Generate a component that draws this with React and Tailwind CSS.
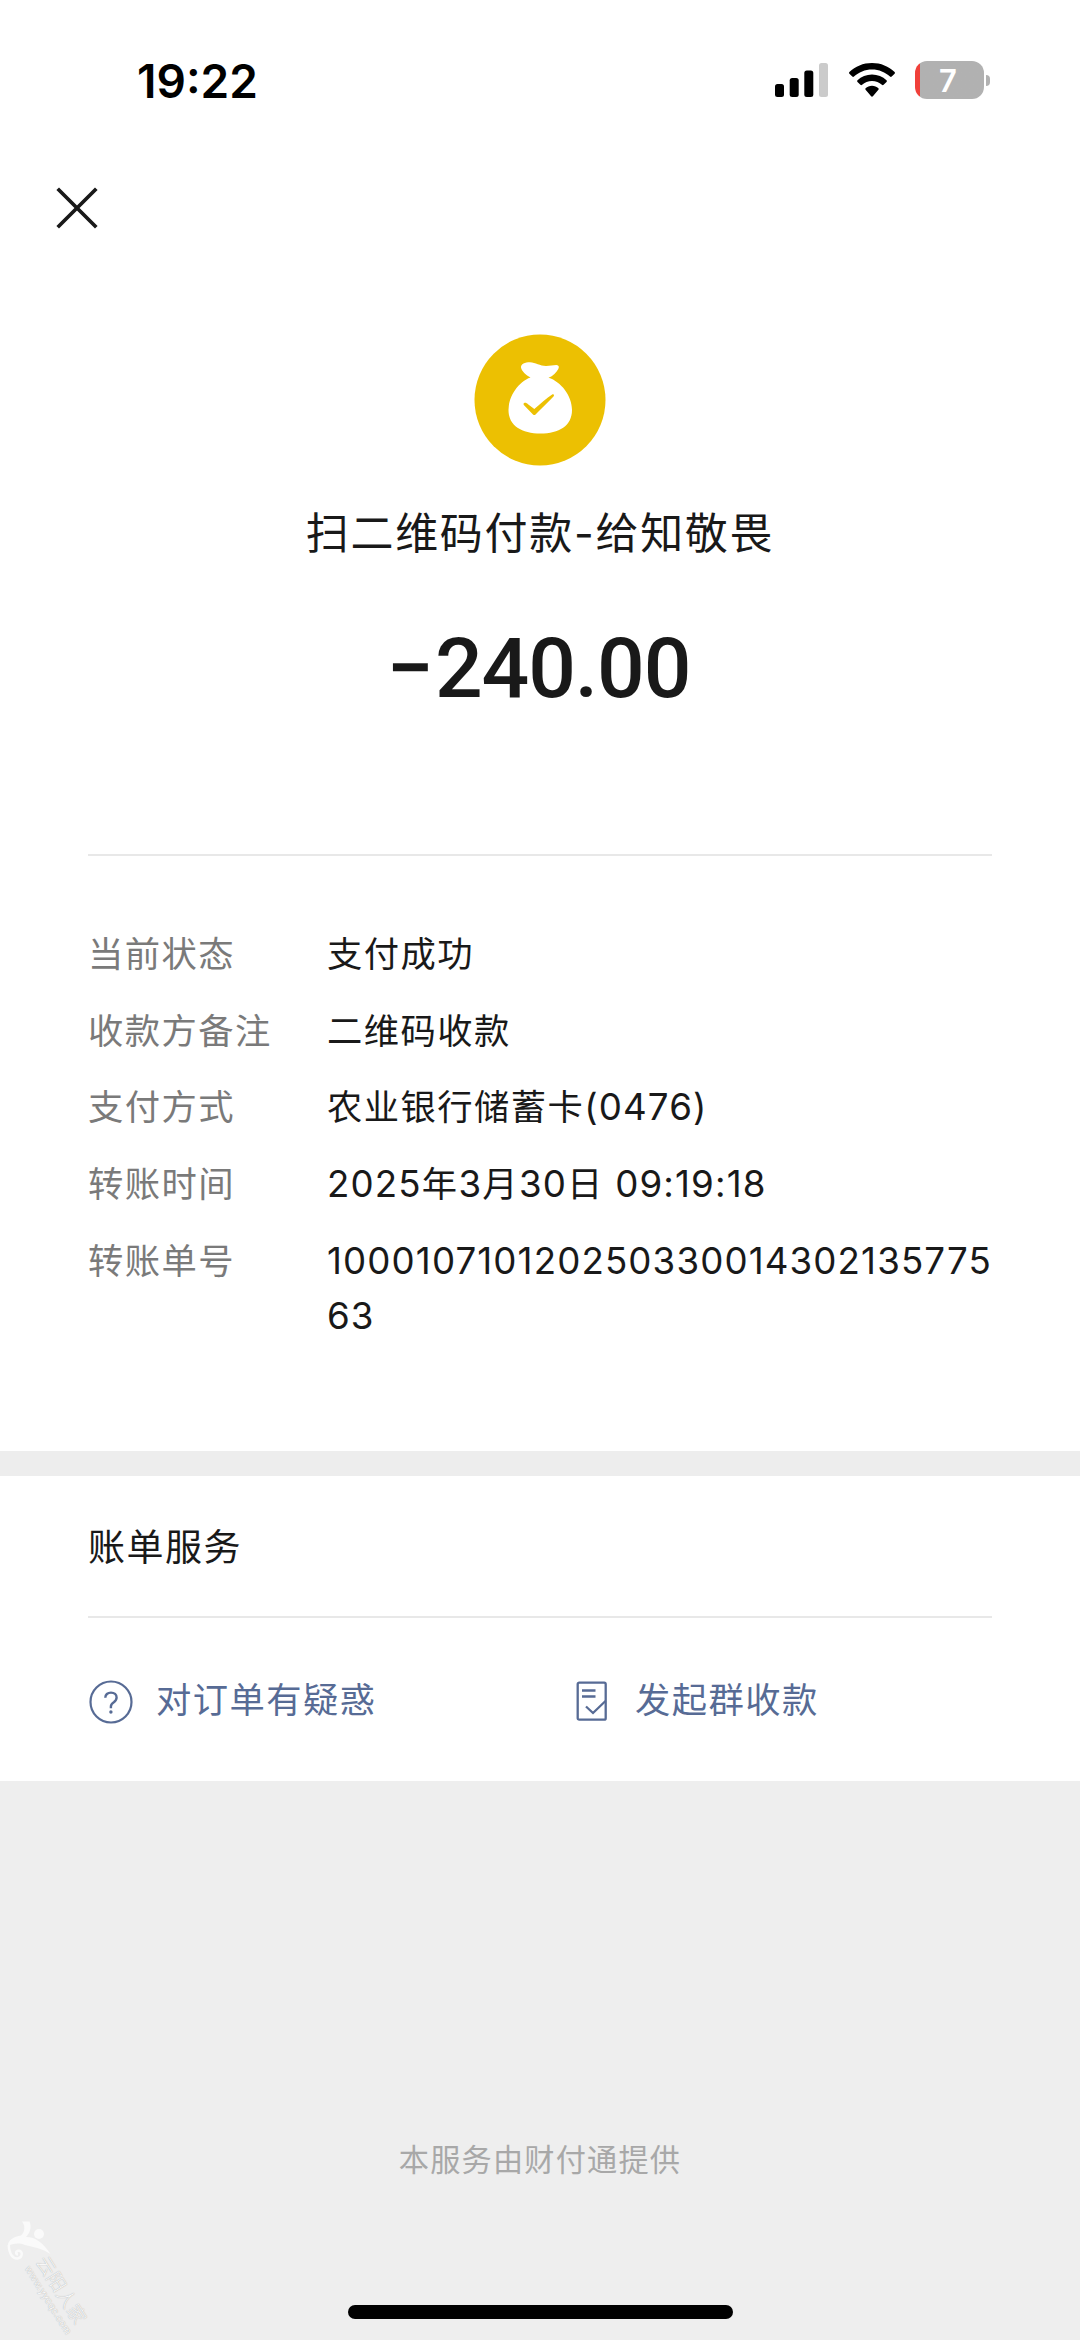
import React from "react";

const details = [
  { label: "当前状态", value: [{ text: "支付成功" }] },
  { label: "收款方备注", value: [{ text: "二维码收款" }] },
  {
    label: "支付方式",
    value: [{ text: "农业银行储蓄卡" }, { text: "(0476)", latin: true }],
  },
  {
    label: "转账时间",
    value: [
      { text: "2025", latin: true },
      { text: "年" },
      { text: "3", latin: true },
      { text: "月" },
      { text: "30", latin: true },
      { text: "日" },
      { text: " 09:19:18", latin: true },
    ],
  },
  {
    label: "转账单号",
    value: [{ text: "10001071012025033001430213577563", latin: true }],
  },
];

function StatusBar() {
  return (
    <div className="flex h-[160px] items-center justify-between pl-[137px] pr-[90px]">
      <span className="pt-px text-[46px] leading-none font-semibold text-black">
        19:22
      </span>
      <div className="flex items-center">
        <svg className="h-[36px] w-[54px]" viewBox="0 0 54 36">
          <rect x="0" y="22" width="9" height="13" rx="2.5" fill="#000" />
          <rect x="14.7" y="16" width="9" height="19" rx="2.5" fill="#000" />
          <rect x="29.3" y="8.5" width="9" height="26.5" rx="2.5" fill="#000" />
          <rect x="44" y="1" width="9" height="34" rx="2.5" fill="#cbcbcb" />
        </svg>
        <svg className="ml-[19px] h-[36px] w-[48px]" viewBox="0 0 48 36">
          <path
            d="M24 1C32.8 1 40.8 4.4 46.600 10C47.100 10.500 47.100 11.200 46.600 11.700L43.700 14.600C43.200 15.100 42.500 15.100 42 14.600C37.300 10.200 31 7.500 24 7.500C17 7.500 10.700 10.200 6 14.600C5.500 15.100 4.800 15.100 4.300 14.600L1.400 11.700C.9 11.200.9 10.500 1.400 10C7.200 4.400 15.200 1 24 1Z"
          />
          <path
            d="M24 12.500C29.600 12.500 34.700 14.700 38.500 18.200C39 18.700 39 19.400 38.500 19.900L35.600 22.800C35.100 23.300 34.400 23.300 33.900 22.800C31.300 20.500 27.800 19 24 19C20.200 19 16.700 20.500 14.100 22.800C13.600 23.300 12.900 23.300 12.400 22.800L9.500 19.900C9 19.400 9 18.700 9.500 18.200C13.300 14.700 18.400 12.500 24 12.500Z"
          />
          <path
            d="M24 23.800C26.500 23.800 28.700 24.700 30.400 26.200C30.900 26.700 30.900 27.300 30.400 27.800L24.900 34.200C24.400 34.800 23.600 34.800 23.100 34.200L17.600 27.800C17.100 27.300 17.100 26.700 17.600 26.200C19.300 24.700 21.500 23.800 24 23.800Z"
          />
        </svg>
        <div className="ml-[19px] flex h-[38px] w-[69px] items-center justify-center overflow-hidden rounded-[12px] bg-linear-to-r from-[#f0403a] from-[5px] to-[#b1b1b1] to-[5px] pr-[3px] pt-px text-[31px] leading-none font-semibold text-white">
          7
        </div>
        <div className="ml-[2px] h-[11px] w-[4px] rounded-r-full bg-[#b1b1b1]"></div>
      </div>
    </div>
  );
}

function MoneyBagIcon() {
  return (
    <svg className="h-[132px] w-[132px]" viewBox="0 0 132 132">
      <circle cx="66" cy="66" r="65.500" fill="#ecc002" />
      <path
        fill="#fff"
        d="M56.500 43.500C52 41 47.500 37 47 33.500C46.700 30 51 28.300 56 28.300C61.500 28.500 66 32 72 32C76 32 79 31 82.500 31C85 31.200 85.300 32.800 84.300 35C82.500 38.500 79 42 74.500 43.800C87 47.500 98 62 98 76C98 92 85 99.500 66.500 99.500C48 99.500 34.500 92 34.500 76C34.500 62 45 47.500 56.500 43.500Z"
      />
      <path
        d="M49.800 69.300C51.500 68.400 52.500 69 54 70.300L60.300 75C66 70 72.500 64.500 78.500 60.300C80 59.800 80.500 61.300 79.500 62.500C73.500 68.500 66.500 75.500 61.300 80.700C60.500 81.300 59.800 81.200 59 80.400L50.300 71.600C49.500 70.800 49.300 70 49.800 69.300Z"
        fill="#ecc002"
      />
    </svg>
  );
}

function QuestionIcon() {
  return (
    <svg
      className="mt-[2px] ml-px h-[44px] w-[44px]"
      viewBox="0 0 44 44"
      fill="none"
      stroke="#576b95"
      strokeWidth="2.200"
    >
      <circle cx="22" cy="22" r="20.500" />
      <path
        strokeWidth="2.400"
        d="M16.300 17.800C16.300 14.600 18.600 12.600 22 12.600C25.300 12.600 27.600 14.700 27.600 17.500C27.600 19.600 26.600 20.900 24.800 22.200C22.700 23.600 21.900 24.600 21.900 26.500V28.200"
      />
      <circle cx="21.900" cy="32" r="1.700" fill="#576b95" stroke="none" />
    </svg>
  );
}

function GroupBillIcon() {
  return (
    <svg
      className="h-[40px] w-[32px]"
      viewBox="0 0 32 40"
      fill="none"
      stroke="#576b95"
      strokeWidth="2.300"
    >
      <rect x="1.700" y="1.700" width="28" height="37" rx="1.500" />
      <path d="M6 9.500H19.500M6 15.500H19.500" />
      <path d="M10 25.500L17 32L29.500 20" />
    </svg>
  );
}

function Watermark() {
  return (
    <div className="absolute top-[2215px] left-0 h-[125px] w-[110px]">
      <svg className="absolute top-[6px] left-[7px]" width="44" height="41" viewBox="0 0 44 41">
        <path
          fill="#fafafa"
          d="M15 .5H22.500C24.500 5 24 11 19 16C29 16 36 22 43.500 33C34 27 26 26 18 24C11 21 5 23 1 25C.5 19 7 15.500 14 14.500C18 11 18.500 5 15 .5Z"
        />
        <path
          fill="none"
          stroke="#fafafa"
          strokeWidth="2.500"
          d="M1.800 24C2 33 6 38 10.500 37.500C16 36.500 16 29.500 11.500 29.800C8.500 30 8.500 33.500 11 33.500"
        />
        <circle cx="32" cy="13" r="5" fill="#fafafa" />
      </svg>
      <div className="absolute top-[38px] left-[49px] origin-top-left rotate-[58deg] whitespace-nowrap text-[#f8f8f8] [text-shadow:0_0_1px_#999]">
        <div className="text-[19px] leading-[20px] font-light">云阳人家</div>
        <div className="text-[10px] leading-[11px]">www.yycqc.com</div>
      </div>
    </div>
  );
}

function App() {
  return (
    <div className="relative flex h-[2341px] w-[1080px] flex-col overflow-hidden bg-white font-[Inter,'Noto_Sans_CJK_SC',sans-serif] text-[#191919]">
      <StatusBar />

      {/* Header */}
      <div className="flex h-24 items-center pl-[56px]">
        <svg
          className="h-[42px] w-[42px]"
          viewBox="0 0 42 42"
          stroke="#191919"
          strokeWidth="3.700"
        >
          <path d="M1.700 1.700L40.300 40.300M40.300 1.700L1.700 40.300" />
        </svg>
      </div>

      {/* Summary */}
      <div className="flex h-[598px] flex-col items-center pt-[78px]">
        <MoneyBagIcon />
        <h1 className="mt-[37px] text-[43px] leading-[60px] tracking-[1.700px] whitespace-nowrap">
          扫二维码付款-给知敬畏
        </h1>
        <p className="mt-14 pr-[3px] font-[Roboto,sans-serif] text-[84px] leading-[100px] font-medium tracking-[-1.100px]">
          <span className="tracking-[1px]">−</span>240.00
        </p>
      </div>

      {/* Transfer details */}
      <div className="mx-[88px] flex h-[597px] flex-col gap-[22px] border-t-2 border-[#e8e8e8] pt-[72px]">
        {details.map((item) => (
          <div key={item.label} className="flex text-[35.300px] leading-[54.700px] tracking-[1.450px]">
            <div className="w-[239px] shrink-0 text-[#7a7a7a]">{item.label}</div>
            <div className="-mr-2 min-w-0 flex-1 break-all">
              {item.value.map((part, i) => (
                <span
                  key={i}
                  className={part.latin ? "text-[36.700px] leading-none tracking-[1.120px]" : ""}
                >
                  {part.text}
                </span>
              ))}
            </div>
          </div>
        ))}
      </div>

      {/* Bill services */}
      <div className="h-[25px] bg-[#ededed]"></div>
      <div className="h-[305px] px-[88px]">
        <h2 className="flex h-[142px] items-center border-b-2 border-[#e8e8e8] pt-[3px] text-[37px] tracking-[1.500px]">
          账单服务
        </h2>
        <div className="flex h-[163px] items-center pt-[3px] text-[35.300px] tracking-[1.450px] text-[#576b95]">
          <div className="flex w-[488px] items-center gap-[23px]">
            <QuestionIcon />
            <span>对订单有疑惑</span>
          </div>
          <div className="flex items-center gap-[27px]">
            <GroupBillIcon />
            <span>发起群收款</span>
          </div>
        </div>
      </div>

      {/* Footer */}
      <div className="flex h-[559px] flex-col items-center justify-end bg-[#eeeeee] pb-[21px]">
        <p className="mb-[123px] text-[30.200px] leading-[44px] tracking-[1.200px] text-[#a8a8a8]">
          本服务由财付通提供
        </p>
        <div className="h-[14px] w-[385px] rounded-full bg-black"></div>
      </div>

      <Watermark />
    </div>
  );
}

export default App;
